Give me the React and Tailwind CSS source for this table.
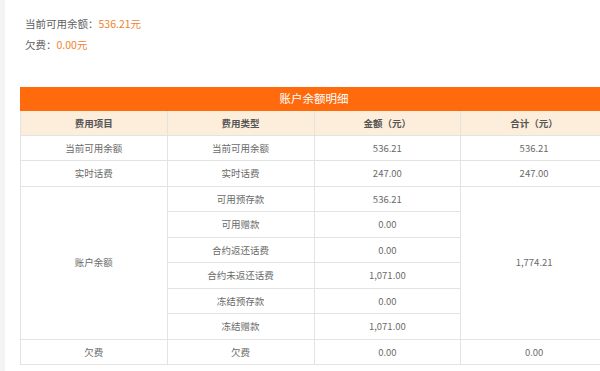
const rows = [
  { item: "当前可用余额", type: "当前可用余额", amount: "536.21", total: "536.21" },
  { item: "实时话费", type: "实时话费", amount: "247.00", total: "247.00" },
];

const balanceRows = [
  { type: "可用预存款", amount: "536.21" },
  { type: "可用赠款", amount: "0.00" },
  { type: "合约返还话费", amount: "0.00" },
  { type: "合约未返还话费", amount: "1,071.00" },
  { type: "冻结预存款", amount: "0.00" },
  { type: "冻结赠款", amount: "1,071.00" },
];

const cell = "border border-[#e3e3e3] h-[25.5px] p-0 text-center align-middle";
const head = "border border-[#e3e3e3] border-t-0 h-[24px] p-0 text-center align-middle font-semibold";

export default function App() {
  return (
    <div
      className="w-[600px] h-[371px] overflow-hidden bg-white border-l-[5px] border-[#f4f4f4] text-[#6a6a6a]"
      style={{ fontFamily: '"Noto Sans CJK SC", "Noto Sans", sans-serif' }}
    >
      {/* 余额概要 */}
      <div className="pl-[20px] pt-[13px] text-[10.5px] leading-[21px] text-[#606060]">
        <p>
          当前可用余额：<span className="text-[#f0832e]">536.21元</span>
        </p>
        <p>
          欠费：<span className="text-[#f0832e]">0.00元</span>
        </p>
      </div>

      {/* 明细表 */}
      <div className="mt-[32px] ml-[15px] w-[588px]">
        <div className="h-[24px] bg-[#ff6a0d] text-white text-[11.5px] flex items-center justify-center">
          账户余额明细
        </div>
        <table className="w-full border-collapse table-fixed text-[9.5px]">
          <thead>
            <tr className="bg-[#fdeedc] text-[#555]">
              <th className={head}>费用项目</th>
              <th className={head}>费用类型</th>
              <th className={head}>金额（元）</th>
              <th className={head}>合计（元）</th>
            </tr>
          </thead>
          <tbody>
            {rows.map((r, i) => (
              <tr key={i}>
                <td className={cell}>{r.item}</td>
                <td className={cell}>{r.type}</td>
                <td className={cell}>{r.amount}</td>
                <td className={cell}>{r.total}</td>
              </tr>
            ))}
            {balanceRows.map((r, i) => (
              <tr key={i}>
                {i === 0 && (
                  <td className={cell} rowSpan={balanceRows.length}>
                    账户余额
                  </td>
                )}
                <td className={cell}>{r.type}</td>
                <td className={cell}>{r.amount}</td>
                {i === 0 && (
                  <td className={cell} rowSpan={balanceRows.length}>
                    1,774.21
                  </td>
                )}
              </tr>
            ))}
            <tr>
              <td className={cell}>欠费</td>
              <td className={cell}>欠费</td>
              <td className={cell}>0.00</td>
              <td className={cell}>0.00</td>
            </tr>
          </tbody>
        </table>
      </div>
    </div>
  );
}
